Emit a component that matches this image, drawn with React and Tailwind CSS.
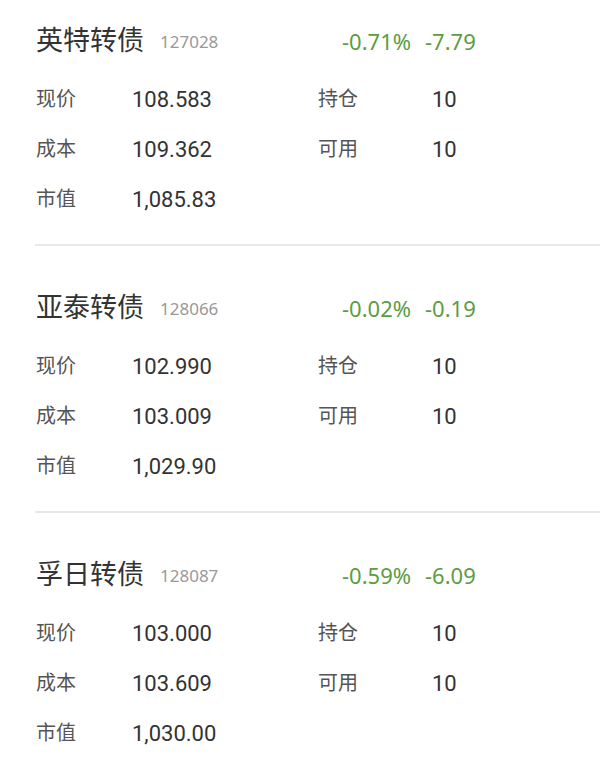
const ITEMS = [
  { name: '英特转债', code: '127028', pct: '-0.71%', chg: '-7.79', price: '108.583', cost: '109.362', value: '1,085.83', hold: '10', avail: '10' },
  { name: '亚泰转债', code: '128066', pct: '-0.02%', chg: '-0.19', price: '102.990', cost: '103.009', value: '1,029.90', hold: '10', avail: '10' },
  { name: '孚日转债', code: '128087', pct: '-0.59%', chg: '-6.09', price: '103.000', cost: '103.609', value: '1,030.00', hold: '10', avail: '10' },
]

function Row({ label, value, label2, value2 }) {
  return (
    <div className="flex h-[50px] items-center text-[20px]">
      <span className="w-[96px] text-[#555]">{label}</span>
      <span className="w-[186px] text-[22px] text-[#333]">{value}</span>
      {label2 && <span className="w-[114px] text-[#555]">{label2}</span>}
      {value2 && <span className="text-[22px] text-[#333]">{value2}</span>}
    </div>
  )
}

function Holding({ item, first, last }) {
  return (
    <div className={first ? 'pt-[21px]' : 'pt-[42px]'}>
      <div className="pl-[36px]">
        {/* header */}
        <div className="flex h-[40px] items-center">
          <span className="w-[124px] text-[27px] text-[#333]">{item.name}</span>
          <span className="w-[182px] pt-[2px] font-['Noto_Sans'] text-[17px] text-[#999]">{item.code}</span>
          <span className="w-[83px] font-['Noto_Sans'] text-[22px] text-[#5c9c42]">{item.pct}</span>
          <span className="font-['Noto_Sans'] text-[22px] text-[#5c9c42]">{item.chg}</span>
        </div>

        <div className="mt-[13px]">
          <Row label="现价" value={item.price} label2="持仓" value2={item.hold} />
          <Row label="成本" value={item.cost} label2="可用" value2={item.avail} />
          <Row label="市值" value={item.value} />
        </div>
      </div>
      {!last && <div className="mt-[20px] ml-[35px] h-[2px] bg-[#e8e8e8]" />}
    </div>
  )
}

export default function App() {
  return (
    <div
      className="w-[600px] h-[778px] overflow-hidden bg-white"
      style={{ fontFamily: "Roboto, 'Noto Sans CJK SC', sans-serif" }}
    >
      {ITEMS.map((it, i) => (
        <Holding key={it.code} item={it} first={i === 0} last={i === ITEMS.length - 1} />
      ))}
    </div>
  )
}
